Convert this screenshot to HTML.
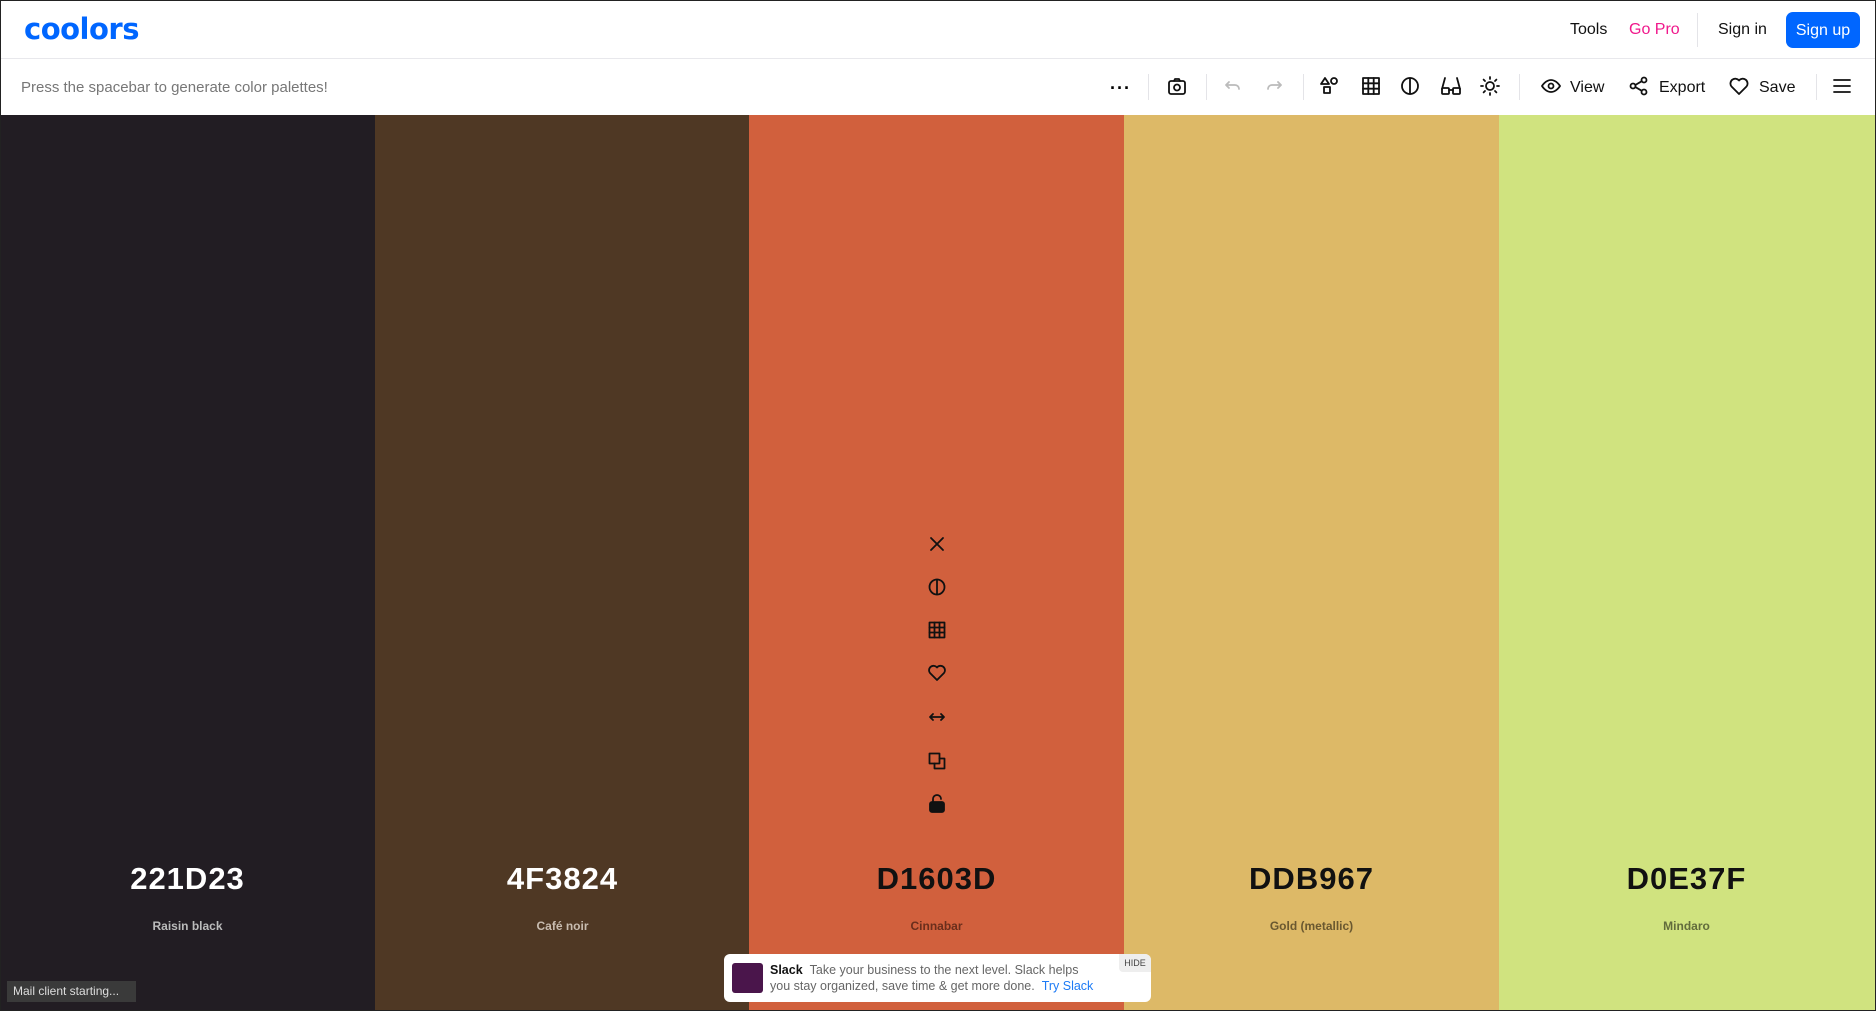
<!DOCTYPE html>
<html><head><meta charset="utf-8"><style>
*{margin:0;padding:0;box-sizing:border-box}
body{width:1876px;height:1011px;overflow:hidden;font-family:"Liberation Sans",sans-serif;background:#fff;position:relative}
.frame{position:absolute;inset:0;border:1px solid #222;pointer-events:none;z-index:10}
.abs{position:absolute}
.hdr{top:0;left:0;width:1876px;height:59px;border-bottom:1px solid #e8e8ec}
.logo{left:24px;top:12px;font-size:29px;font-weight:bold;color:#0066ff;letter-spacing:-0.5px;font-family:"DejaVu Sans",sans-serif}
.t{font-size:16px;color:#111}
.sep{width:1px;background:#e4e4e8}
.col{top:115px;height:896px}
.hex{font-size:31px;font-weight:bold;letter-spacing:1px;width:375px;text-align:center;top:861px}
.nm{font-size:12px;font-weight:bold;width:375px;text-align:center;top:919px}
svg.i{position:absolute;fill:none;stroke:#111;stroke-width:1.8;stroke-linecap:round;stroke-linejoin:round}
</style></head><body>
<div class="abs hdr"></div>
<div class="abs logo">coolors</div>
<div class="abs t" style="left:1570px;top:21px">Tools</div>
<div class="abs t" style="left:1629px;top:21px;color:#f0198c">Go Pro</div>
<div class="abs sep" style="left:1697px;top:13px;height:34px"></div>
<div class="abs t" style="left:1718px;top:21px">Sign in</div>
<div class="abs" style="left:1786px;top:12px;width:74px;height:36px;background:#0066ff;border-radius:7px;color:#fff;font-size:16px;text-align:center;line-height:38px">Sign up</div>
<div class="abs" style="left:21px;top:79px;font-size:15px;color:#777">Press the spacebar to generate color palettes!</div>
<!-- toolbar -->
<div class="abs" style="left:1110px;top:78px;font-size:18px;font-weight:bold;letter-spacing:1px">···</div>
<div class="abs sep" style="left:1148px;top:74px;height:26px"></div>
<svg class="i" style="left:1167px;top:76px" width="20" height="20" viewBox="0 0 20 20"><rect x="2" y="5" width="16" height="13" rx="2"/><path d="M7 5l1-2h4l1 2"/><circle cx="10" cy="11.5" r="3"/></svg>
<div class="abs sep" style="left:1206px;top:74px;height:26px"></div>
<svg class="i" style="left:1224px;top:78px;stroke:#bbb" width="18" height="16" viewBox="0 0 18 16"><path d="M5 4L2 7l3 3M2 7h9a4 4 0 0 1 4 4"/></svg>
<svg class="i" style="left:1265px;top:78px;stroke:#bbb" width="18" height="16" viewBox="0 0 18 16"><path d="M13 4l3 3-3 3M16 7H7a4 4 0 0 0-4 4"/></svg>
<div class="abs sep" style="left:1303px;top:74px;height:26px"></div>
<svg class="i" style="left:1320px;top:76px" width="20" height="20" viewBox="0 0 20 20"><path d="M5 2l4 6H1z"/><circle cx="14" cy="5" r="3"/><rect x="4" y="11" width="6" height="6"/></svg>
<svg class="i" style="left:1361px;top:76px" width="20" height="20" viewBox="0 0 20 20"><rect x="2" y="2" width="16" height="16"/><path d="M7.3 2v16M12.7 2v16M2 7.3h16M2 12.7h16"/></svg>
<svg class="i" style="left:1400px;top:76px" width="20" height="20" viewBox="0 0 20 20"><circle cx="10" cy="10" r="8"/><path d="M10 2v16"/></svg>
<svg class="i" style="left:1440px;top:76px" width="22" height="20" viewBox="0 0 22 20"><path d="M5 2L2 13M17 2l3 11"/><rect x="2" y="12" width="7" height="6" rx="1"/><rect x="13" y="12" width="7" height="6" rx="1"/><path d="M9 14h4"/></svg>
<svg class="i" style="left:1480px;top:76px" width="20" height="20" viewBox="0 0 20 20"><circle cx="10" cy="10" r="4"/><path d="M10 1v2M10 17v2M1 10h2M17 10h2M3.6 3.6l1.4 1.4M15 15l1.4 1.4M3.6 16.4L5 15M15 5l1.4-1.4"/></svg>
<div class="abs sep" style="left:1519px;top:74px;height:26px"></div>
<svg class="i" style="left:1541px;top:78px" width="20" height="16" viewBox="0 0 20 16"><path d="M1 8s3.5-6 9-6 9 6 9 6-3.5 6-9 6-9-6-9-6z"/><circle cx="10" cy="8" r="2.5"/></svg>
<div class="abs t" style="left:1570px;top:79px;font-weight:500">View</div>
<svg class="i" style="left:1629px;top:76px" width="20" height="20" viewBox="0 0 20 20"><circle cx="4" cy="10" r="2.5"/><circle cx="15" cy="4" r="2.5"/><circle cx="15" cy="16" r="2.5"/><path d="M6.3 9l6.5-3.8M6.3 11l6.5 3.8"/></svg>
<div class="abs t" style="left:1659px;top:79px">Export</div>
<svg class="i" style="left:1729px;top:77px" width="20" height="18" viewBox="0 0 20 18"><path d="M10 17L2.5 9.5A4.5 4.5 0 0 1 10 3.5a4.5 4.5 0 0 1 7.5 6z"/></svg>
<div class="abs t" style="left:1759px;top:79px">Save</div>
<div class="abs sep" style="left:1816px;top:74px;height:26px"></div>
<svg class="i" style="left:1833px;top:78px" width="18" height="16" viewBox="0 0 18 16"><path d="M1 2h16M1 8h16M1 14h16"/></svg>
<!-- columns -->
<div class="abs col" style="left:0;width:375px;background:#221d23"></div>
<div class="abs col" style="left:375px;width:374px;background:#4f3824"></div>
<div class="abs col" style="left:749px;width:375px;background:#d1603d"></div>
<div class="abs col" style="left:1124px;width:375px;background:#ddb967"></div>
<div class="abs col" style="left:1499px;width:377px;background:#d0e37f"></div>
<div class="abs hex" style="left:0;color:#fff">221D23</div>
<div class="abs nm" style="left:0;color:#bbb">Raisin black</div>
<div class="abs hex" style="left:375px;color:#fff">4F3824</div>
<div class="abs nm" style="left:375px;color:#c8bcb0">Café noir</div>
<div class="abs hex" style="left:749px;color:#111">D1603D</div>
<div class="abs nm" style="left:749px;color:#6a2e1c">Cinnabar</div>
<div class="abs hex" style="left:1124px;color:#111">DDB967</div>
<div class="abs nm" style="left:1124px;color:#6a5830">Gold (metallic)</div>
<div class="abs hex" style="left:1499px;color:#111">D0E37F</div>
<div class="abs nm" style="left:1499px;color:#626c3c">Mindaro</div>
<!-- center icons -->
<svg class="i" style="left:928px;top:535px" width="18" height="18" viewBox="0 0 18 18"><path d="M3 3l12 12M15 3L3 15"/></svg>
<svg class="i" style="left:928px;top:578px" width="18" height="18" viewBox="0 0 18 18"><circle cx="9" cy="9" r="7.5"/><path d="M9 1.5v15"/></svg>
<svg class="i" style="left:928px;top:621px" width="18" height="18" viewBox="0 0 18 18"><rect x="1.5" y="1.5" width="15" height="15"/><path d="M6.5 1.5v15M11.5 1.5v15M1.5 6.5h15M1.5 11.5h15"/></svg>
<svg class="i" style="left:928px;top:664px" width="18" height="18" viewBox="0 0 18 18"><path d="M9 16L2 9A4 4 0 0 1 9 3.5 4 4 0 0 1 16 9z"/></svg>
<svg class="i" style="left:928px;top:708px" width="18" height="18" viewBox="0 0 18 18"><path d="M2 9h14M5 6L2 9l3 3M13 6l3 3-3 3"/></svg>
<svg class="i" style="left:928px;top:752px" width="18" height="18" viewBox="0 0 18 18"><rect x="1.5" y="1.5" width="10" height="10"/><path d="M11.5 6.5h5v10h-10v-5"/></svg>
<svg class="i" style="left:928px;top:794px" width="18" height="20" viewBox="0 0 18 20"><rect x="2" y="8" width="14" height="10" rx="2" fill="#111"/><path d="M5 8V5a4 4 0 0 1 8 0"/></svg>
<!-- ad -->
<div class="abs" style="left:724px;top:954px;width:427px;height:48px;background:#fff;border-radius:6px"></div>
<div class="abs" style="left:732px;top:963px;width:31px;height:30px;background:#4a154b;border-radius:3px"></div>
<div class="abs" style="left:770px;top:962px;font-size:12.5px;color:#666;line-height:16px;width:330px"><b style="color:#111">Slack</b>&nbsp;&nbsp;Take your business to the next level. Slack helps you stay organized, save time &amp; get more done. &nbsp;<span style="color:#1d7bf5">Try Slack</span></div>
<div class="abs" style="left:1119px;top:954px;width:32px;height:18px;background:#eee;border-radius:0 6px 0 4px;font-size:9px;color:#444;text-align:center;line-height:18px">HIDE</div>
<div class="abs" style="left:7px;top:981px;width:129px;height:21px;background:#3a3a3a;color:#ddd;font-size:12px;line-height:21px;padding-left:6px">Mail client starting...</div>
<div class="frame"></div>
</body></html>
